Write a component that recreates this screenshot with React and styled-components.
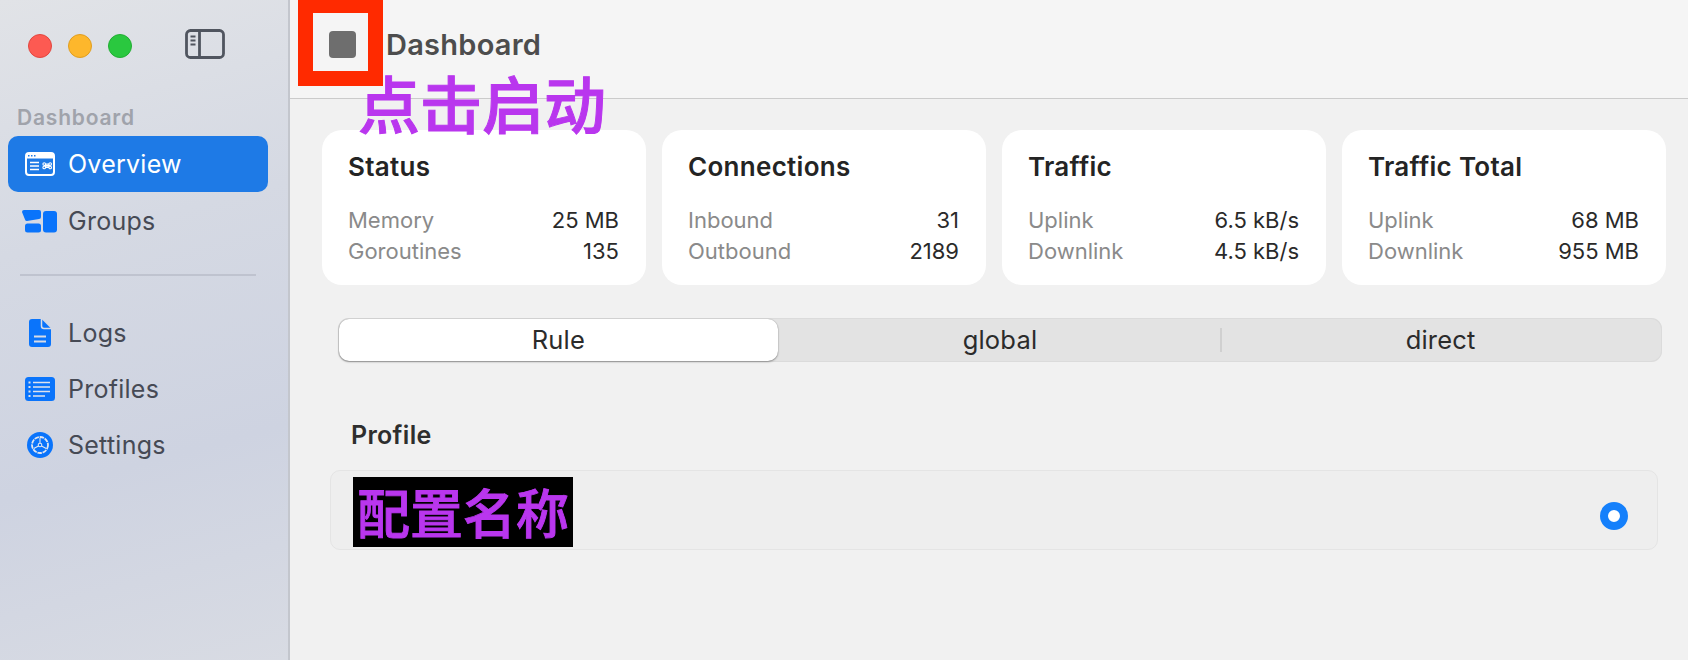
import React from 'react'
import styled, { createGlobalStyle } from 'styled-components'

const GlobalStyle = createGlobalStyle`
    html, body {
        margin: 0;
        padding: 0;
        background: #f1f1f1;
    }

    body {
        font-family: Inter, "Noto Sans", "Liberation Sans", sans-serif;
        overflow: hidden;
    }
`

const Window = styled.div`
    position: relative;
    display: flex;
    width: 1688px;
    height: 660px;
    overflow: hidden;
`

const Sidebar = styled.aside`
    display: flex;
    flex-direction: column;
    flex: 0 0 290px;
    box-sizing: border-box;
    padding: 0 20px 0 8px;
    background: linear-gradient(165deg, #e1e3e7 0%, #d5d9e3 35%, #ced3e1 68%, #d8dbe3 100%);
    border-right: 2px solid #c3c6cd;
`

const TitleBar = styled.div`
    display: flex;
    align-items: center;
    height: 92px;
    padding-left: 20px;
`

const Light = styled.span`
    width: 24px;
    height: 24px;
    margin-right: 16px;
    border-radius: 50%;
    box-sizing: border-box;
    background: ${(props) => props.color};
    border: 1px solid ${(props) => props.edge};
`

const ToggleButton = styled.div`
    display: flex;
    margin-left: 37px;
    margin-top: -4px;
`

const SectionLabel = styled.div`
    height: 44px;
    padding: 14px 0 0 9px;
    box-sizing: border-box;
    font-size: 21px;
    line-height: 24px;
    letter-spacing: 0.8px;
    font-weight: 600;
    color: #a0a3ab;
`

const NavItem = styled.div`
    display: flex;
    align-items: center;
    gap: 10px;
    height: 56px;
    margin-bottom: ${(props) => (props.$tight ? '1px' : '0')};
    padding-left: 14px;
    border-radius: 10px;
    font-size: 25px;
    letter-spacing: 0.25px;
    color: ${(props) => (props.$active ? '#ffffff' : '#464a55')};
    background: ${(props) => (props.$active ? '#1e7ae6' : 'transparent')};
`

const NavIcon = styled.svg`
    width: 36px;
    height: 32px;
    flex: none;
`

const SideRule = styled.div`
    height: 2px;
    margin: 25px 12px 29px 12px;
    background: #bfc3cf;
`

const Main = styled.main`
    display: flex;
    flex-direction: column;
    flex: 1;
    min-width: 0;
    background: #f1f1f1;
`

const Header = styled.header`
    display: flex;
    align-items: center;
    gap: 30px;
    height: 99px;
    box-sizing: border-box;
    padding: 0 0 9px 39px;
    background: #f5f5f5;
    border-bottom: 1px solid #cbcbcb;
`

const StopButton = styled.div`
    width: 27px;
    height: 27px;
    margin-top: -1px;
    border-radius: 4px;
    background: #6e6e6e;
`

const HeaderTitle = styled.h1`
    margin: 0;
    font-size: 29px;
    line-height: 34px;
    letter-spacing: 0.25px;
    font-weight: 600;
    color: #4d4d4d;
`

const Content = styled.div`
    display: flex;
    flex-direction: column;
    padding: 31px 22px 0 32px;
`

const CardGrid = styled.div`
    display: grid;
    grid-template-columns: repeat(4, 1fr);
    gap: 16px;
`

const Card = styled.section`
    height: 155px;
    box-sizing: border-box;
    padding: 22px 27px 0 26px;
    border-radius: 20px;
    background: #ffffff;
`

const CardTitle = styled.h2`
    margin: 0 0 23px;
    font-size: 26px;
    line-height: 30px;
    letter-spacing: 0.3px;
    font-weight: 600;
    color: #242424;
`

const StatRow = styled.div`
    display: flex;
    justify-content: space-between;
    font-size: 22px;
    line-height: 31px;
`

const StatLabel = styled.span`
    color: #8a8a8a;
`

const StatValue = styled.span`
    color: #2a2a2a;
`

const Segmented = styled.div`
    display: grid;
    grid-template-columns: repeat(3, 1fr);
    height: 44px;
    margin: 33px 4px 0 16px;
    box-sizing: border-box;
    padding: 1px;
    border-radius: 11px;
    background: #e3e3e3;
    box-shadow: inset 0 0 0 1px #dbdbdb;
`

const Segment = styled.div`
    position: relative;
    display: flex;
    align-items: center;
    justify-content: center;
    margin-right: ${(props) => (props.$active ? '2px' : '0')};
    padding-bottom: 2px;
    font-size: 25.500px;
    letter-spacing: 0.2px;
    color: #2b2b2b;
    border-radius: 10px;
    background: ${(props) => (props.$active ? '#ffffff' : 'transparent')};
    box-shadow: ${(props) => (props.$active ? '0 1px 2px rgba(0, 0, 0, 0.35), 0 0 1px rgba(0, 0, 0, 0.3)' : 'none')};

    &::before {
        content: "";
        display: ${(props) => (props.$divided ? 'block' : 'none')};
        position: absolute;
        left: 0;
        top: 9px;
        bottom: 9px;
        width: 2px;
        background: #d0d0d0;
    }
`

const ProfileHeading = styled.h3`
    margin: 58px 0 0 29px;
    font-size: 25px;
    line-height: 30px;
    letter-spacing: 0.3px;
    font-weight: 600;
    color: #2e2e2e;
`

const ProfileRow = styled.div`
    display: flex;
    align-items: center;
    justify-content: space-between;
    height: 80px;
    margin: 20px 8px 0;
    box-sizing: border-box;
    padding: 5px 29px 0 22px;
    border: 1px solid #e4e4e4;
    border-radius: 10px;
    background: #eeeeee;
`

const ProfileName = styled.div`
    display: flex;
    align-items: center;
    justify-content: center;
    width: 220px;
    height: 70px;
    margin-top: -2px;
    padding-bottom: 2px;
    box-sizing: border-box;
    background: #000000;
    color: #b936ee;
    font-family: "Noto Sans CJK SC", sans-serif;
    font-size: 53px;
    font-weight: 500;
    -webkit-text-stroke: 0.9px #b936ee;
    line-height: 68px;
`

const Radio = styled.div`
    width: 28px;
    height: 28px;
    margin-top: 6px;
    box-sizing: border-box;
    border: 8px solid #1580fb;
    border-radius: 50%;
    background: #ffffff;
`

const RedMarker = styled.div`
    position: absolute;
    left: 298px;
    top: 0;
    width: 85px;
    height: 86px;
    box-sizing: border-box;
    border: 15px solid #ff2a00;
    border-top-width: 13px;
`

const StartHint = styled.div`
    position: absolute;
    left: 358px;
    top: 72px;
    color: #b936ee;
    font-family: "Noto Sans CJK SC", sans-serif;
    font-size: 62px;
    font-weight: 500;
    -webkit-text-stroke: 1px #b936ee;
    line-height: 60px;
    white-space: nowrap;
`

const cards = [
    { title: 'Status', rows: [['Memory', '25 MB'], ['Goroutines', '135']] },
    { title: 'Connections', rows: [['Inbound', '31'], ['Outbound', '2189']] },
    { title: 'Traffic', rows: [['Uplink', '6.5 kB/s'], ['Downlink', '4.5 kB/s']] },
    { title: 'Traffic Total', rows: [['Uplink', '68 MB'], ['Downlink', '955 MB']] },
]

function SidebarToggle() {
    return (
        <svg width="40" height="32" viewBox="0 0 40 32" fill="none">
            <rect x="1.500" y="2.500" width="37" height="27" rx="4" stroke="#50555f" strokeWidth="2.800" />
            <path d="M14.500 2.500v27" stroke="#50555f" strokeWidth="2.800" />
            <path d="M5.500 8.500h5M5.500 12.500h5M5.500 16.500h5" stroke="#50555f" strokeWidth="2" />
        </svg>
    )
}

function OverviewIcon() {
    return (
        <NavIcon viewBox="0 0 36 32" fill="none">
            <rect x="4" y="5" width="28" height="22" rx="3" stroke="#fff" strokeWidth="2" />
            <path d="M4 10.500V8a3 3 0 0 1 3-3h22a3 3 0 0 1 3 3v2.500z" fill="#fff" />
            <path d="M6 7.800h1.500M9 7.800h1.500M12 7.800h1.500" stroke="#1e7ae6" strokeWidth="1.400" />
            <path d="M8 14.500h9M8 18h9M8 21.500h9" stroke="#fff" strokeWidth="1.500" />
            <path d="M23.500 16h3.500v3.500h-3.500zM23.500 16a1.300 1.300 0 1 0-1.300 1.300h6a1.300 1.300 0 1 0-1.300-1.300v3.500a1.300 1.300 0 1 0 1.300-1.300h-6a1.300 1.300 0 1 0 1.300 1.300z" stroke="#fff" strokeWidth="1.100" />
        </NavIcon>
    )
}

function GroupsIcon() {
    return (
        <NavIcon viewBox="0 0 36 32" fill="#0a74fb">
            <path d="M2 5h15a2 2 0 0 1 2 2v5a2 2 0 0 1-2 2L5 16a2 2 0 0 1-2-1.500L0 7a2 2 0 0 1 2-2z" />
            <rect x="3" y="18.500" width="16" height="9" rx="2.500" />
            <rect x="21" y="6" width="14" height="21.500" rx="3" />
        </NavIcon>
    )
}

function LogsIcon() {
    return (
        <NavIcon viewBox="0 0 36 32">
            <path d="M10 2h9.500L29 11.500V27a3 3 0 0 1-3 3H10a3 3 0 0 1-3-3V5a3 3 0 0 1 3-3z" fill="#0a74fb" />
            <path d="M19.500 2v7a2.500 2.500 0 0 0 2.500 2.500h7" fill="none" stroke="#d8dce6" strokeWidth="1.500" />
            <path d="M12 19.500h12M12 24.500h12" stroke="#d8dce6" strokeWidth="1.800" />
        </NavIcon>
    )
}

function ProfilesIcon() {
    return (
        <NavIcon viewBox="0 0 36 32">
            <rect x="3" y="4" width="30" height="24" rx="3.500" fill="#0a74fb" />
            <path d="M11 9.500h17M11 14h17M11 18.500h17M11 23h12" stroke="#dfe3ec" strokeWidth="1.600" />
            <path d="M6.500 9.500h2M6.500 14h2M6.500 18.500h2M6.500 23h2" stroke="#dfe3ec" strokeWidth="1.800" />
        </NavIcon>
    )
}

function SettingsIcon() {
    return (
        <NavIcon viewBox="0 0 36 32" fill="none">
            <circle cx="18" cy="16" r="13" fill="#0a74fb" />
            <circle cx="18" cy="16" r="8" stroke="#e2e6ef" strokeWidth="1.800" strokeDasharray="4.500 0.800" />
            <circle cx="18" cy="16" r="1.800" stroke="#e2e6ef" strokeWidth="1.100" />
            <path d="M18 9v5.200M11.800 19.600l4.700-2.700M24.200 19.600l-4.700-2.700" stroke="#e2e6ef" strokeWidth="1.100" />
        </NavIcon>
    )
}

export default function App() {
    return (
        <Window>
            <GlobalStyle />
            <Sidebar>
                <TitleBar>
                    <Light color="#fd5a52" edge="#e2463f" />
                    <Light color="#fdb72c" edge="#e09e20" />
                    <Light color="#2ac83f" edge="#22ae34" />
                    <ToggleButton>
                        <SidebarToggle />
                    </ToggleButton>
                </TitleBar>
                <SectionLabel>Dashboard</SectionLabel>
                <NavItem $active $tight><OverviewIcon />Overview</NavItem>
                <NavItem><GroupsIcon />Groups</NavItem>
                <SideRule />
                <NavItem><LogsIcon />Logs</NavItem>
                <NavItem><ProfilesIcon />Profiles</NavItem>
                <NavItem><SettingsIcon />Settings</NavItem>
            </Sidebar>
            <Main>
                <Header>
                    <StopButton />
                    <HeaderTitle>Dashboard</HeaderTitle>
                </Header>
                <Content>
                    <CardGrid>
                        {cards.map((card) => (
                            <Card key={card.title}>
                                <CardTitle>{card.title}</CardTitle>
                                {card.rows.map(([label, value]) => (
                                    <StatRow key={label}>
                                        <StatLabel>{label}</StatLabel>
                                        <StatValue>{value}</StatValue>
                                    </StatRow>
                                ))}
                            </Card>
                        ))}
                    </CardGrid>
                    <Segmented>
                        <Segment $active>Rule</Segment>
                        <Segment>global</Segment>
                        <Segment $divided>direct</Segment>
                    </Segmented>
                    <ProfileHeading>Profile</ProfileHeading>
                    <ProfileRow>
                        <ProfileName>配置名称</ProfileName>
                        <Radio />
                    </ProfileRow>
                </Content>
            </Main>
            <RedMarker />
            <StartHint>点击启动</StartHint>
        </Window>
    )
}
